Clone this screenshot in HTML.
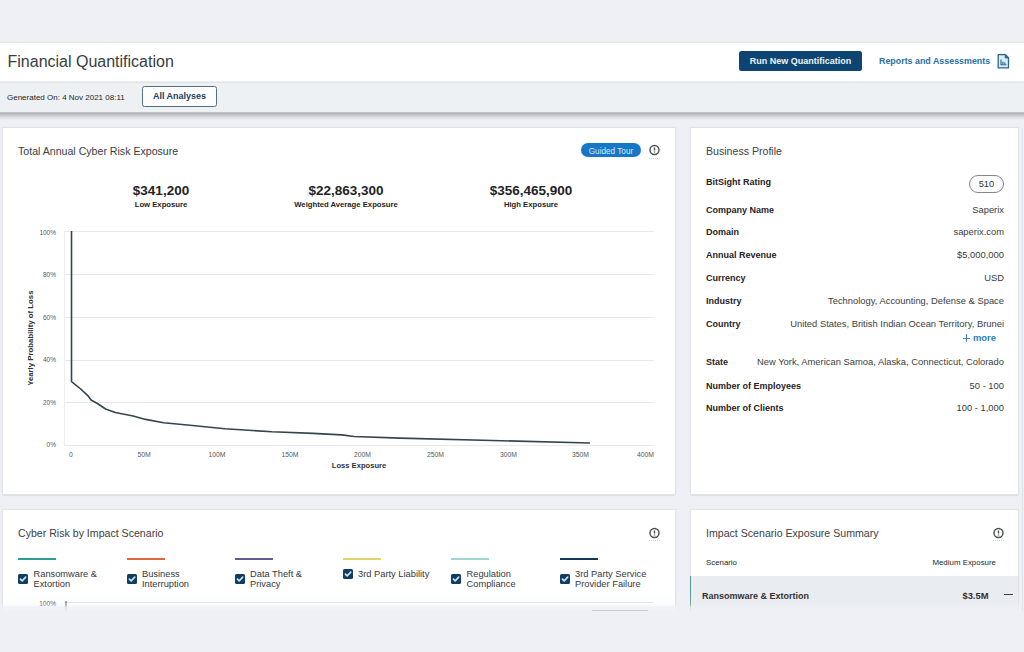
<!DOCTYPE html>
<html><head><meta charset="utf-8">
<style>
*{box-sizing:border-box;margin:0;padding:0}
html,body{width:1024px;height:652px;overflow:hidden}
body{background:#eef0f5;font-family:"Liberation Sans",sans-serif;color:#2b2f33;position:relative}
.a{position:absolute;white-space:nowrap}
#hdr{position:absolute;left:0;top:43px;width:1024px;height:38px;background:#fff;box-shadow:0 -1px 1.5px rgba(0,0,0,.05)}
#sub{position:absolute;left:0;top:81px;width:1024px;height:31px;background:#eef1f4}
#subl{position:absolute;left:0;top:81.5px;width:1024px;height:1.5px;background:#e2e5e8}
#shd{position:absolute;left:0;top:111.5px;width:1024px;height:8px;background:linear-gradient(rgba(60,66,72,.25),rgba(60,66,72,.33) 1.5px,rgba(60,66,72,.26) 3px,rgba(60,66,72,.1) 5.5px,rgba(60,66,72,0) 8px)}
.card{position:absolute;background:#fff;box-shadow:0 0 0 1.2px #e1e3e6,0 1.5px 1.5px rgba(0,0,0,.2)}
.t1{font-size:16px;color:#3a3d40}
.btn{position:absolute;left:739px;top:51px;width:123px;height:20px;background:#0d4472;border-radius:2.5px;color:#eef5fa;font-weight:700;font-size:9px;line-height:20px;text-align:center}
.lnk{color:#28709f;font-weight:700;font-size:8.9px}
.ctitle{font-size:10.6px;color:#3b3e42}
.big{font-size:13.5px;font-weight:700;color:#1f2326;text-align:center}
.lbl{font-size:7.7px;font-weight:700;color:#1f2326;text-align:center}
.ax{font-size:6.5px;color:#55595d}
.bp{font-size:9px;font-weight:700;color:#1f2326}
.chk{width:10px;height:10px;background:#123c60;border-radius:1.5px}
.leg{font-size:9.3px;line-height:10.3px;color:#35383b}
.bv{font-size:9.4px;color:#3a3d40;text-align:right}
</style></head><body>

<div id="hdr"></div>
<div class="a t1" style="left:7.5px;top:51.7px;line-height:20px">Financial Quantification</div>
<div class="btn">Run New Quantification</div>
<div class="a lnk" style="left:879px;top:55px;line-height:12px">Reports and Assessments</div>
<svg class="a" style="left:996px;top:52px" width="14" height="18" viewBox="0 0 14 18">
  <path d="M2.2 2.6h7.2l3.1 3.2v10.1h-10.3z" fill="#d6eef7" stroke="#2f6688" stroke-width="1.3" stroke-linejoin="round"/>
  <path d="M9.2 2.6v3.4h3.3z" fill="#2f6688" stroke="#2f6688" stroke-width="0.8" stroke-linejoin="round"/>
  <path d="M5 7.6v5.2h5.4" fill="none" stroke="#2f6688" stroke-width="1.1"/>
  <path d="M6.9 9.8v2.4M8.8 10.6v1.6" fill="none" stroke="#2f6688" stroke-width="1.2"/>
</svg>

<div id="sub"></div><div id="subl"></div><div id="shd"></div>
<div class="a" style="left:7px;top:92.7px;font-size:8px;line-height:10px;color:#222528">Generated On: 4 Nov 2021 08:11</div>
<div class="a" style="left:142px;top:86px;width:75px;height:21px;border:1.3px solid #566e80;border-radius:2.5px;background:#fcfdfe;font-size:9px;font-weight:700;color:#223f5a;text-align:center;line-height:18.4px">All Analyses</div>

<!-- Card 1 -->
<div class="card" style="left:3px;top:128px;width:672px;height:366px"></div>
<div class="a ctitle" style="left:18px;top:145px;line-height:13px">Total Annual Cyber Risk Exposure</div>
<div class="a" style="left:580.6px;top:142.6px;width:60.8px;height:14.9px;border-radius:8px;background:#1777c7;color:#d8ebf8;font-size:8.2px;line-height:17.6px;text-align:center">Guided Tour</div>
<svg class="a" style="left:648px;top:144px" width="13" height="13" viewBox="0 0 13 13"><circle cx="6.5" cy="6" r="4.5" fill="none" stroke="#4d5155" stroke-width="1.45"/><path d="M6.5 3.5v3.1M6.5 7.6v1" stroke="#4d5155" stroke-width="1.4"/></svg>

<div class="a big" style="left:111px;top:183.3px;width:100px;line-height:15px">$341,200</div>
<div class="a lbl" style="left:111px;top:200px;width:100px;line-height:10px">Low Exposure</div>
<div class="a big" style="left:266px;top:183.3px;width:160px;line-height:15px">$22,863,300</div>
<div class="a lbl" style="left:266px;top:200px;width:160px;line-height:10px">Weighted Average Exposure</div>
<div class="a big" style="left:461px;top:183.3px;width:140px;line-height:15px">$356,465,900</div>
<div class="a lbl" style="left:461px;top:200px;width:140px;line-height:10px">High Exposure</div>

<svg class="a" style="left:0;top:0" width="680" height="500">
  <g stroke="#e6e8eb" stroke-width="1">
    <line x1="64" y1="231.5" x2="654" y2="231.5"/>
    <line x1="64" y1="274.5" x2="654" y2="274.5"/>
    <line x1="64" y1="317.5" x2="654" y2="317.5"/>
    <line x1="64" y1="360.5" x2="654" y2="360.5"/>
    <line x1="64" y1="402.5" x2="654" y2="402.5"/>
    <line x1="64" y1="445.5" x2="654" y2="445.5"/>
  </g>
  <line x1="64.5" y1="231" x2="64.5" y2="446" stroke="#eceef0" stroke-width="1"/>
  <path d="M71.5 231V381.5L72.2 382.1L80.7 389L88.3 396.2L91.1 400L97.3 403.5L105.6 409L115.2 412.5L133.2 416L145.6 419.4L163.6 422.8L190 425.2L224.9 428.7L272 431.8L313 433.4L341.8 434.9L354 436.5L400 438.1L492.5 440.5L590 443" fill="none" stroke="#33454d" stroke-width="1.6" stroke-linejoin="round"/>
  <g font-family="Liberation Sans" font-size="6.5" fill="#55595d" text-anchor="end">
    <text x="56" y="234.5">100%</text>
    <text x="56" y="277">80%</text>
    <text x="56" y="319.5">60%</text>
    <text x="56" y="362">40%</text>
    <text x="56" y="404.5">20%</text>
    <text x="56" y="447">0%</text>
  </g>
  <g font-family="Liberation Sans" font-size="6.8" fill="#55595d" text-anchor="middle">
    <text x="71" y="456.5">0</text>
    <text x="144" y="456.5">50M</text>
    <text x="217" y="456.5">100M</text>
    <text x="290" y="456.5">150M</text>
    <text x="362.5" y="456.5">200M</text>
    <text x="435.5" y="456.5">250M</text>
    <text x="508.5" y="456.5">300M</text>
    <text x="580.5" y="456.5">350M</text>
    <text x="654" y="456.5" text-anchor="end">400M</text>
  </g>
  <text x="359" y="468" font-family="Liberation Sans" font-size="7.6" font-weight="700" fill="#2f3336" text-anchor="middle">Loss Exposure</text>
  <text transform="translate(33 338.2) rotate(-90)" font-family="Liberation Sans" font-size="7.8" font-weight="700" fill="#2f3336" text-anchor="middle">Yearly Probability of Loss</text>
</svg>

<!-- Card 2 -->
<div class="card" style="left:691px;top:128px;width:327px;height:366px"></div>
<div class="a ctitle" style="left:706px;top:145px;line-height:13px">Business Profile</div>
<div class="a bp" style="left:706px;top:177px;line-height:11px">BitSight Rating</div>
<div class="a" style="left:968.7px;top:175.2px;width:35.6px;height:17.7px;border:1.5px solid #7f878d;border-radius:9px;font-size:9.4px;color:#2c3a42;text-align:center;line-height:15px">510</div>
<div class="a bp" style="left:706px;top:205px;line-height:11px">Company Name</div>
<div class="a bv" style="right:20px;top:204px;line-height:11px">Saperix</div>
<div class="a bp" style="left:706px;top:227px;line-height:11px">Domain</div>
<div class="a bv" style="right:20px;top:226px;line-height:11px">saperix.com</div>
<div class="a bp" style="left:706px;top:250px;line-height:11px">Annual Revenue</div>
<div class="a bv" style="right:20px;top:249px;line-height:11px">$5,000,000</div>
<div class="a bp" style="left:706px;top:273px;line-height:11px">Currency</div>
<div class="a bv" style="right:20px;top:272px;line-height:11px">USD</div>
<div class="a bp" style="left:706px;top:296px;line-height:11px">Industry</div>
<div class="a bv" style="right:20px;top:295px;line-height:11px">Technology, Accounting, Defense &amp; Space</div>
<div class="a bp" style="left:706px;top:319px;line-height:11px">Country</div>
<div class="a bv" style="right:20px;top:318px;line-height:11px">United States, British Indian Ocean Territory, Brunei</div>
<div class="a" style="left:962.5px;top:337.8px;width:7.5px;height:1px;background:#4a88b0"></div><div class="a" style="left:965.8px;top:334.4px;width:1px;height:7.6px;background:#4a88b0"></div><div class="a" style="left:973px;top:331.6px;line-height:11px;font-size:9.4px;font-weight:700;color:#2b7db5">more</div>
<div class="a bp" style="left:706px;top:357px;line-height:11px">State</div>
<div class="a bv" style="right:20px;top:356px;line-height:11px">New York, American Samoa, Alaska, Connecticut, Colorado</div>
<div class="a bp" style="left:706px;top:381px;line-height:11px">Number of Employees</div>
<div class="a bv" style="right:20px;top:380px;line-height:11px">50 - 100</div>
<div class="a bp" style="left:706px;top:403px;line-height:11px">Number of Clients</div>
<div class="a bv" style="right:20px;top:402px;line-height:11px">100 - 1,000</div>

<!-- Card 3 -->
<div class="card" style="left:3px;top:510px;width:672px;height:142px"></div>
<div class="a ctitle" style="left:18px;top:527px;line-height:13px">Cyber Risk by Impact Scenario</div>
<div class="a" style="left:18px;top:557.8px;width:38px;height:2.6px;background:#2a9d97"></div>
<div class="a chk" style="left:18px;top:574px"><svg width="10" height="10" viewBox="0 0 10 10" style="display:block"><path d="M2.4 5.1L4.2 6.9L7.7 3.2" fill="none" stroke="#c6e2f6" stroke-width="1.7" stroke-linecap="round" stroke-linejoin="round"/></svg></div>
<div class="a leg" style="left:33.5px;top:568.5px">Ransomware &amp;<br>Extortion</div>
<div class="a" style="left:126.5px;top:557.8px;width:38px;height:2.6px;background:#e0683c"></div>
<div class="a chk" style="left:126.5px;top:574px"><svg width="10" height="10" viewBox="0 0 10 10" style="display:block"><path d="M2.4 5.1L4.2 6.9L7.7 3.2" fill="none" stroke="#c6e2f6" stroke-width="1.7" stroke-linecap="round" stroke-linejoin="round"/></svg></div>
<div class="a leg" style="left:142.0px;top:568.5px">Business<br>Interruption</div>
<div class="a" style="left:234.5px;top:557.8px;width:38px;height:2.6px;background:#5f5a92"></div>
<div class="a chk" style="left:234.5px;top:574px"><svg width="10" height="10" viewBox="0 0 10 10" style="display:block"><path d="M2.4 5.1L4.2 6.9L7.7 3.2" fill="none" stroke="#c6e2f6" stroke-width="1.7" stroke-linecap="round" stroke-linejoin="round"/></svg></div>
<div class="a leg" style="left:250.0px;top:568.5px">Data Theft &amp;<br>Privacy</div>
<div class="a" style="left:342.5px;top:557.8px;width:38px;height:2.6px;background:#e2d46a"></div>
<div class="a chk" style="left:342.5px;top:569px"><svg width="10" height="10" viewBox="0 0 10 10" style="display:block"><path d="M2.4 5.1L4.2 6.9L7.7 3.2" fill="none" stroke="#c6e2f6" stroke-width="1.7" stroke-linecap="round" stroke-linejoin="round"/></svg></div>
<div class="a leg" style="left:358.0px;top:568.5px">3rd Party Liability</div>
<div class="a" style="left:451px;top:557.8px;width:38px;height:2.6px;background:#9fd6d2"></div>
<div class="a chk" style="left:451px;top:574px"><svg width="10" height="10" viewBox="0 0 10 10" style="display:block"><path d="M2.4 5.1L4.2 6.9L7.7 3.2" fill="none" stroke="#c6e2f6" stroke-width="1.7" stroke-linecap="round" stroke-linejoin="round"/></svg></div>
<div class="a leg" style="left:466.5px;top:568.5px">Regulation<br>Compliance</div>
<div class="a" style="left:559.5px;top:557.8px;width:38px;height:2.6px;background:#12395a"></div>
<div class="a chk" style="left:559.5px;top:574px"><svg width="10" height="10" viewBox="0 0 10 10" style="display:block"><path d="M2.4 5.1L4.2 6.9L7.7 3.2" fill="none" stroke="#c6e2f6" stroke-width="1.7" stroke-linecap="round" stroke-linejoin="round"/></svg></div>
<div class="a leg" style="left:575.0px;top:568.5px">3rd Party Service<br>Provider Failure</div>
<svg class="a" style="left:0;top:595px" width="680" height="20"><text x="56" y="11.2" font-family="Liberation Sans" font-size="6.6" fill="#45494d" text-anchor="end">100%</text><line x1="64" y1="7.5" x2="653" y2="7.5" stroke="#e3e5e8"/><line x1="66" y1="6" x2="66" y2="16" stroke="#55595d" stroke-width="1.2"/></svg>
<svg class="a" style="left:648px;top:527px" width="13" height="13" viewBox="0 0 13 13"><circle cx="6.5" cy="6" r="4.5" fill="none" stroke="#4d5155" stroke-width="1.45"/><path d="M6.5 3.5v3.1M6.5 7.6v1" stroke="#4d5155" stroke-width="1.4"/></svg>

<!-- Card 4 -->
<div class="card" style="left:691px;top:510px;width:327px;height:142px"></div>
<div class="a ctitle" style="left:706px;top:527px;line-height:13px">Impact Scenario Exposure Summary</div>
<div class="a" style="left:706px;top:557.5px;font-size:7.85px;line-height:10px;color:#25282b">Scenario</div>
<div class="a" style="right:28px;top:557.5px;font-size:7.9px;line-height:10px;color:#25282b">Medium Exposure</div>
<div class="a" style="left:690px;top:576px;width:328px;height:40px;background:#e9ecf0;border-left:1.5px solid #5f958f"></div>
<div class="a" style="left:702px;top:590.3px;font-size:9px;font-weight:700;line-height:12px;color:#1f2326">Ransomware &amp; Extortion</div>
<div class="a" style="right:35.5px;top:590px;font-size:9.4px;font-weight:700;line-height:12px;color:#1f2326">$3.5M</div>
<div class="a" style="left:1003.5px;top:593.6px;width:9.2px;height:1.8px;background:#34373a"></div>
<svg class="a" style="left:992px;top:527px" width="13" height="13" viewBox="0 0 13 13"><circle cx="6.5" cy="6" r="4.5" fill="none" stroke="#4d5155" stroke-width="1.45"/><path d="M6.5 3.5v3.1M6.5 7.6v1" stroke="#4d5155" stroke-width="1.4"/></svg>

<div class="a" style="left:0;top:590px;width:1024px;height:21px;background:linear-gradient(rgba(238,240,245,0),rgba(238,240,245,.12) 12px,rgba(238,240,245,.35) 15px,rgba(238,240,245,.85) 17.5px,rgba(238,240,245,.9) 21px)"></div>
<div class="a" style="left:1021.5px;top:128px;width:1px;height:483px;background:#e0e3e7"></div>
<div class="a" style="left:592px;top:610px;width:56px;height:1.2px;background:#c6c9cd"></div>
<div class="a" style="left:649px;top:157.5px;width:11px;height:0;border-top:1px dotted #d3d6da"></div>
<div class="a" style="left:649px;top:540px;width:11px;height:0;border-top:1px dotted #d3d6da"></div>
<div class="a" style="left:993px;top:540px;width:11px;height:0;border-top:1px dotted #d3d6da"></div>
<!-- bottom cutoff -->
<div class="a" style="left:0;top:611px;width:1024px;height:41px;background:#eef0f5"></div>
</body></html>
